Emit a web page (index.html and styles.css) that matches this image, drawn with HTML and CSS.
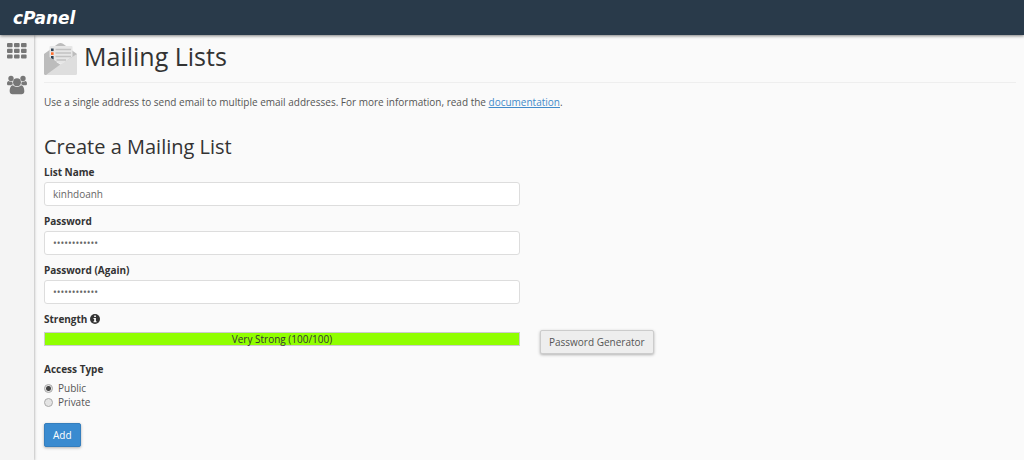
FILE: index.html
```html
<!DOCTYPE html>
<html lang="en">
<head>
  <meta charset="UTF-8" />
  <meta name="viewport" content="width=device-width, initial-scale=1.0"/>
  <title>cPanel - Mailing Lists</title>
  <link rel="stylesheet" href="styles.css">
</head>
<body>
  <header class="topbar">
    <a href="#" class="logo">cPanel</a>
  </header>
  <div class="wrapper">
    <nav class="sidebar">
      <a href="#" aria-label="Home">
        <svg width="20" height="16" viewBox="0 0 20 16" fill="currentColor">
          <rect x="0" y="0" width="5.6" height="4.200" rx="1"/>
          <rect x="7" y="0" width="5.6" height="4.200" rx="1"/>
          <rect x="14" y="0" width="5.6" height="4.200" rx="1"/>
          <rect x="0" y="5.7" width="5.6" height="4.200" rx="1"/>
          <rect x="7" y="5.7" width="5.6" height="4.200" rx="1"/>
          <rect x="14" y="5.7" width="5.6" height="4.200" rx="1"/>
          <rect x="0" y="11.4" width="5.6" height="4.200" rx="1"/>
          <rect x="7" y="11.4" width="5.6" height="4.200" rx="1"/>
          <rect x="14" y="11.4" width="5.6" height="4.200" rx="1"/>
        </svg>
      </a>
      <a href="#" aria-label="Users">
        <svg width="21" height="20" viewBox="0 0 21 20" fill="currentColor">
          <circle cx="4.2" cy="3.2" r="2.8"/>
          <circle cx="16.8" cy="3.2" r="2.8"/>
          <circle cx="10.5" cy="7" r="4.1"/>
          <path d="M1.5 5.7C.4 6 0 7.4 0 8.6 0 9.7.7 10.2 1.7 10.2H4.3C4.9 9.5 5.6 9.3 6.3 9.2 5.7 8.3 5.5 7.3 5.6 6.3 4.2 6.8 2.7 6.6 1.5 5.7Z"/>
          <path d="M19.5 5.7C20.6 6 21 7.4 21 8.6 21 9.7 20.3 10.2 19.3 10.2H16.7C16.1 9.5 15.4 9.3 14.7 9.2 15.3 8.3 15.5 7.3 15.4 6.3 16.8 6.8 18.3 6.6 19.5 5.7Z"/>
          <path d="M6.3 10.2C3.8 10.4 2.8 13.5 2.8 16.5 2.8 18.6 4 19.6 5.8 19.6H15.2C17 19.6 18.2 18.6 18.2 16.5 18.2 13.5 17.2 10.4 14.7 10.2 12.3 12.5 8.7 12.5 6.3 10.2Z"/>
        </svg>
      </a>
    </nav>
    <main class="content">
      <div class="page-title">
        <svg class="page-icon" width="33" height="33" viewBox="0 0 33 33">
          <path d="M0 12 14 1.8Q16.5 0 19 1.8L33 12V20H0Z" fill="#bcbcbc"/>
          <path d="M0 12 17 23 3 33H1.5Q0 33 0 31.500Z" fill="#bcbcbc"/>
          <path d="M33 12V31.500Q33 33 31.500 33H2L17 22Z" fill="#dedede"/>
          <path d="M5.500 5Q5.500 4 6.500 4H27.500Q28.500 4 28.500 5V14.500L19.500 21Q17 22.500 14.500 21L5.500 15Z" fill="#e6e6e6"/>
          <path d="M11.500 7.500H27M11.500 11H27M11.500 14.500H27M12.500 18H22" stroke="#c2c2c2" stroke-width="1.3" fill="none"/>
          <rect x="7" y="6.500" width="2.600" height="2.600" fill="#2f4050"/>
          <rect x="7" y="10.300" width="2.600" height="2.600" fill="#ff6c2c"/>
          <path d="M7 14.100H9.600V17.500L7 15.900Z" fill="#2f4050"/>
        </svg>
        <h1>Mailing Lists</h1>
      </div>
      <p class="description">Use a single address to send email to multiple email addresses. For more information, read the <a href="#">documentation</a>.</p>

      <h2>Create a Mailing List</h2>
      <form class="form">
        <div class="form-group">
          <label for="listName">List Name</label>
          <input type="text" id="listName" class="form-control" value="kinhdoanh">
        </div>
        <div class="form-group">
          <label for="password">Password</label>
          <input type="password" id="password" class="form-control" value="abcdefghijkl">
        </div>
        <div class="form-group">
          <label for="password2">Password (Again)</label>
          <input type="password" id="password2" class="form-control" value="abcdefghijkl">
        </div>
        <div class="form-group">
          <div class="label">Strength
            <svg class="info" width="10" height="10" viewBox="0 0 10 10">
              <circle cx="5" cy="5" r="5" fill="#333"/>
              <path d="M4.2 1.5H5.9V3H4.2ZM3.5 4H5.9V7.2H6.6V8.3H3.5V7.2H4.2V5H3.5Z" fill="#fff"/>
            </svg>
          </div>
          <div class="strength-bar">Very Strong (100/100)</div>
        </div>
        <div class="generator">
          <button type="button" class="btn btn-default">Password Generator</button>
        </div>
        <fieldset class="access">
          <legend>Access Type</legend>
          <label><input type="radio" name="access" checked> Public</label>
          <label><input type="radio" name="access"> Private</label>
        </fieldset>
        <div class="actions">
          <button type="button" class="btn btn-primary">Add</button>
        </div>
      </form>
    </main>
  </div>
</body>
</html>
```
FILE: styles.css
```css
* {
  box-sizing: border-box;
}

body {
  display: flex;
  flex-direction: column;
  min-height: 100vh;
  margin: 0;
  background-color: #fafafa;
  color: #333;
  font-family: "Open Sans", sans-serif;
  font-size: 10px;
  line-height: 14px;
}

.topbar {
  position: relative;
  display: flex;
  align-items: center;
  height: 35px;
  padding: 0 13px;
  background-color: #293a4a;
  box-shadow: 0 1px 3px rgba(0, 0, 0, 0.5);
}

.logo {
  color: #fff;
  font-family: "DejaVu Sans", sans-serif;
  font-size: 17px;
  font-weight: 700;
  font-style: italic;
  line-height: 20px;
  text-decoration: none;
}

.wrapper {
  display: flex;
  flex: 1;
}

.sidebar {
  display: flex;
  flex-direction: column;
  gap: 16px;
  width: 34px;
  padding: 8px 7px;
  background-color: #f4f4f4;
  box-shadow: 0 0 3px rgba(0, 0, 0, 0.4);
}

.sidebar a {
  display: flex;
  color: #777;
}

.content {
  flex: 1;
  padding: 7px 8px 14px 10px;
}

.page-title {
  display: flex;
  gap: 7px;
  height: 41px;
  border-bottom: 1px solid #eee;
}

h1,
h2 {
  margin: 0;
  font-weight: 400;
}

h1 {
  font-size: 25px;
  line-height: 28px;
}

.description {
  margin: 12px 0 26px;
  color: #555;
}

.description a {
  color: #428bca;
}

h2 {
  font-size: 20px;
  line-height: 24px;
}

.form {
  display: grid;
  grid-template-columns: 1fr 1fr;
  column-gap: 20px;
  margin-top: 6px;
}

.form-group,
.access,
.actions {
  grid-column: 1;
}

.form-group {
  margin-bottom: 8px;
}

.form-group label,
.label,
legend {
  display: block;
  margin-bottom: 3px;
  padding: 0;
  font-weight: 700;
}

.form-control {
  display: block;
  width: 100%;
  height: 24px;
  padding: 0 8px;
  border: 1px solid #ddd;
  border-radius: 3px;
  background-color: #fff;
  color: #666;
  font: inherit;
}

.info {
  vertical-align: -1px;
}

.strength-bar {
  height: 14px;
  margin-top: 6px;
  border: 1px solid #ccc;
  background-color: #90ff00;
  line-height: 12px;
  text-align: center;
}

.generator {
  grid-column: 2;
  align-self: end;
}

.btn {
  height: 24px;
  padding: 0 8px;
  border: 1px solid #ccc;
  border-radius: 2px;
  box-shadow: 0 1px 3px rgba(0, 0, 0, 0.3);
  font: inherit;
  cursor: pointer;
}

.btn-default {
  background-color: #eee;
  color: #555;
}

.btn-primary {
  border-color: #357ebd;
  background-color: #3a8bd0;
  color: #fff;
}

.access {
  margin: 8px 0 14px;
  padding: 0;
  border: 0;
}

.access legend {
  margin-bottom: 5px;
}

.access label {
  display: flex;
  align-items: center;
  gap: 5px;
  color: #555;
}

.access input {
  appearance: none;
  width: 9px;
  height: 9px;
  margin: 0;
  border: 1px solid #aaa;
  border-radius: 50%;
  background-color: #e4e4e4;
}

.access input:checked {
  background-image: radial-gradient(circle, #444 2px, transparent 3px);
}
```
